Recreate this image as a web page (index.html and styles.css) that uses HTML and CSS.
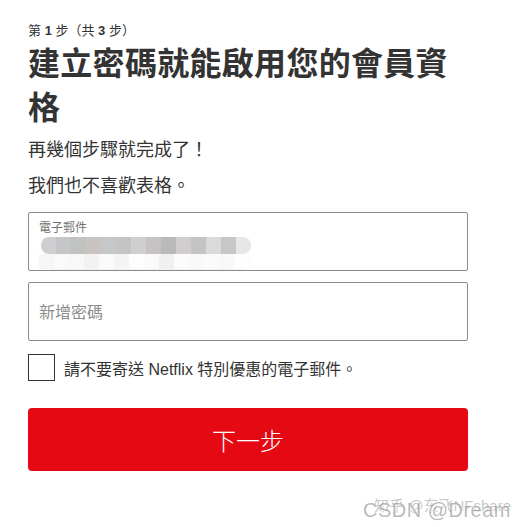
FILE: index.html
```html
<!DOCTYPE html>
<html lang="zh-Hant">
<head>
<meta charset="utf-8">
<link rel="stylesheet" href="styles.css">
</head>
<body>
<div class="page">
  <div class="step">第 <b>1</b> 步（共 <b>3</b> 步）</div>
  <h1 class="title">建立密碼就能啟用您的會員資格</h1>
  <p class="lead">再幾個步驟就完成了！</p>
  <p class="lead">我們也不喜歡表格。</p>
  <div class="field filled">
    <div class="label">電子郵件</div>
    <div class="blur">
      <div class="row top">
        <span style="background:#cfcfd1"></span><span style="background:#c4c6c7"></span><span style="background:#c1c2c2"></span><span style="background:#c9c4c2"></span><span style="background:#c6c7c8"></span><span style="background:#c3c4c3"></span><span style="background:#cdcfd0"></span><span style="background:#c7c3c3"></span><span style="background:#b9babb"></span><span style="background:#d1cdcd"></span><span style="background:#c4c4c5"></span><span style="background:#dadad9"></span><span style="background:#c6c7c6"></span><span style="background:#e6e8e8"></span>
      </div>
      <div class="row bottom">
        <span style="background:#f6f6f6"></span><span style="background:#fafafa"></span><span style="background:#f8f8f8"></span><span style="background:#f2f2f2"></span><span style="background:#fbfbfb"></span><span style="background:#f4f4f4"></span><span style="background:#fdfdfd"></span><span style="background:#fafafa"></span><span style="background:#f0f0f0"></span><span style="background:#fcfcfc"></span><span style="background:#f9f9f9"></span><span style="background:#fbfbfb"></span><span style="background:#f8f8f8"></span><span style="background:#fefefe"></span>
      </div>
    </div>
  </div>
  <div class="field">
    <div class="placeholder">新增密碼</div>
  </div>
  <label class="check">
    <span class="box"></span>
    <span class="check-text">請不要寄送 Netflix 特別優惠的電子郵件。</span>
  </label>
  <button class="next">下一步</button>
</div>
<div class="watermark">
  <span class="wm1">知乎 @东飞NFshare</span>
  <span class="wm2">CSDN @Dream</span>
</div>
</body>
</html>
```
FILE: styles.css
```css
html, body {
  margin: 0;
  padding: 0;
  background: #fff;
}
body {
  font-family: "Liberation Sans", Arial, "Noto Sans CJK TC", sans-serif;
  color: #333;
  position: relative;
  width: 523px;
  height: 527px;
  overflow: hidden;
}
.page {
  padding: 22px 0 0 28px;
  width: 440px;
}
.step {
  font-size: 13px;
  line-height: 18px;
  color: #333;
}
.step b {
  font-weight: bold;
}
.title {
  margin: 2px 0 8px;
  font-size: 32px;
  line-height: 44px;
  font-weight: bold;
  color: #333;
  letter-spacing: 0.3px;
}
.lead {
  margin: 0 0 11px;
  font-size: 18px;
  line-height: 25px;
  color: #333;
}
.field {
  margin-top: 0;
  height: 57px;
  border: 1px solid #8c8c8c;
  border-radius: 2px;
  position: relative;
  box-sizing: content-box;
}
.field.filled {
  margin-top: 13px;
  margin-bottom: 11px;
}
.label {
  position: absolute;
  left: 10px;
  top: 7px;
  font-size: 12px;
  line-height: 16px;
  color: #737373;
}
.blur {
  position: absolute;
  left: 10px;
  top: 24px;
  width: 212px;
  filter: blur(0.6px);
}
.row {
  display: flex;
}
.row span {
  width: 15px;
  flex: none;
}
.row.top {
  height: 17px;
  margin-left: 2px;
}
.row.top span:first-child {
  border-radius: 8px 0 0 8px;
}
.row.top span:last-child {
  border-radius: 0 8px 8px 0;
}
.row.bottom {
  height: 15px;
  width: 210px;
  border-radius: 0 0 10px 20px;
  box-shadow: 0 1px 2px rgba(0,0,0,0.06);
}
.placeholder {
  position: absolute;
  left: 10px;
  top: 20px;
  font-size: 16px;
  line-height: 20px;
  color: #8c8c8c;
}
.check {
  display: flex;
  align-items: center;
  margin-top: 13px;
  gap: 9px;
}
.box {
  width: 25px;
  height: 25px;
  border: 1px solid #333;
  flex: none;
  background: #fff;
}
.check-text {
  font-size: 16px;
  color: #333;
}
.next {
  display: block;
  width: 440px;
  height: 63px;
  margin-top: 27px;
  background: #e50914;
  border: none;
  border-radius: 4px;
  color: #fff;
  font-family: "Noto Sans CJK TC", sans-serif;
  font-weight: 300;
  font-size: 24px;
  padding: 0;
}
.watermark {
  position: absolute;
  right: 12px;
  top: 494px;
  width: 150px;
  height: 30px;
}
.wm1, .wm2 {
  position: absolute;
  right: 0;
  white-space: nowrap;
  color: rgba(150,150,150,0.55);
  text-shadow: 1px 1px 0 rgba(255,255,255,0.9);
}
.wm1 {
  top: 0;
  font-size: 15px;
}
.wm2 {
  top: 5px;
  font-size: 20px;
  letter-spacing: 0.5px;
  color: rgba(140,140,140,0.6);
}
```
